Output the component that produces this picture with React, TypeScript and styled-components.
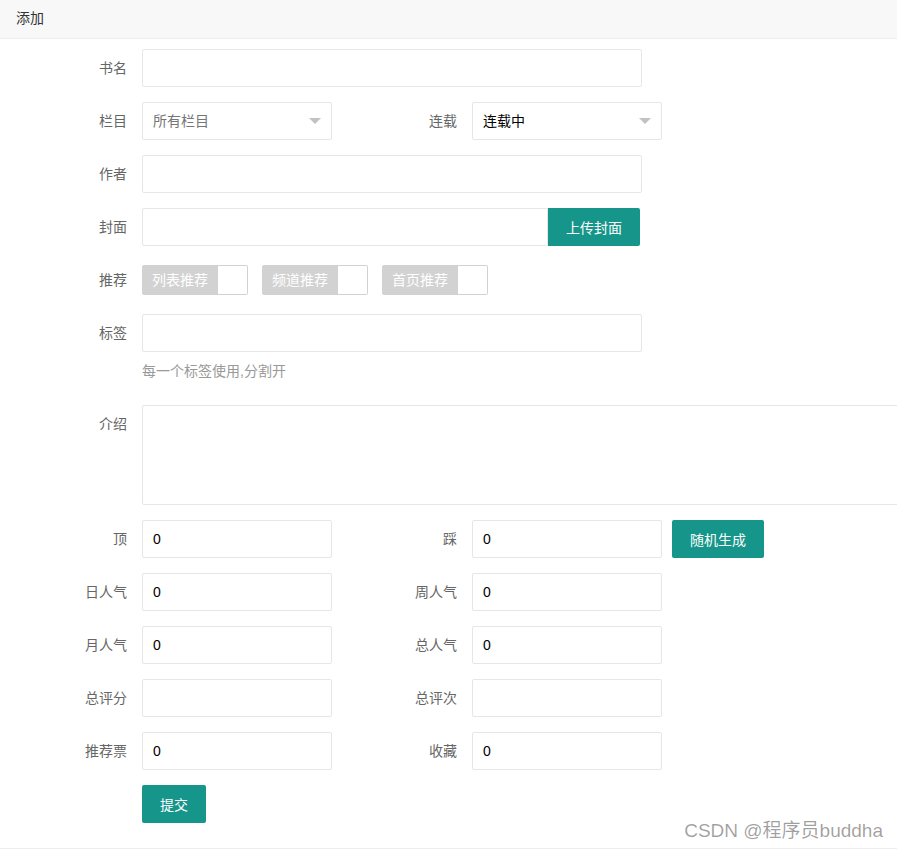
import React from "react";
import styled, { createGlobalStyle } from "styled-components";

const Global = createGlobalStyle`
  html, body { margin: 0; padding: 0; background: #fff; }
  body {
    font-family: "Liberation Sans", "Noto Sans CJK SC", sans-serif;
    font-size: 14px;
    color: #333;
  }
  * { box-sizing: border-box; }
`;

const Card = styled.div`
  position: relative;
  background: #fff;
  border-bottom: 1px solid #eee;
  overflow: hidden;
`;

const Header = styled.div`
  height: 39px;
  line-height: 36px;
  padding: 0 16px;
  background: #f8f8f8;
  border-bottom: 1px solid #eeeeee;
  color: #333;
  font-size: 14px;
`;

const Body = styled.div`
  padding: 10px 0 10px 32px;
`;

const Item = styled.div`
  display: flex;
  align-items: flex-start;
  margin-bottom: 15px;
`;

const Inline = styled.div<{ $gap?: number }>`
  display: flex;
  align-items: flex-start;
  flex: none;
  margin-right: ${(p) => p.$gap ?? 0}px;
`;

const Label = styled.label`
  flex: none;
  width: 110px;
  padding: 9px 15px;
  line-height: 20px;
  text-align: right;
  color: #666;
  white-space: nowrap;
`;

const Column = styled.div`
  display: flex;
  flex-direction: column;
`;

const Input = styled.input<{ $w?: number }>`
  display: block;
  flex: none;
  width: ${(p) => p.$w ?? 190}px;
  height: 38px;
  padding: 0 10px;
  border: 1px solid #e6e6e6;
  border-radius: 2px;
  background: #fff;
  font: inherit;
  font-size: 14px;
  color: #000;
  outline: none;
`;

const Group = styled.div`
  display: flex;
  flex: none;
  width: 498px;
`;

const GroupInput = styled(Input)`
  flex: 1;
  width: auto;
  border-radius: 2px 0 0 2px;
`;

const Button = styled.button<{ $ml?: number }>`
  flex: none;
  height: 38px;
  line-height: 38px;
  padding: 0 18px;
  margin-left: ${(p) => p.$ml ?? 0}px;
  border: none;
  border-radius: 2px;
  background: #16968a;
  color: #fff;
  font: inherit;
  font-size: 14px;
  white-space: nowrap;
  cursor: pointer;
`;

const GroupButton = styled(Button)`
  border-radius: 0 2px 2px 0;
`;

const Select = styled.div<{ $placeholder?: boolean }>`
  position: relative;
  flex: none;
  width: 190px;
  height: 38px;
  line-height: 36px;
  padding: 0 30px 0 10px;
  border: 1px solid #e6e6e6;
  border-radius: 2px;
  background: #fff;
  color: ${(p) => (p.$placeholder ? "#757575" : "#000")};
  &::after {
    content: "";
    position: absolute;
    right: 10px;
    top: 15px;
    border-width: 6px;
    border-style: solid;
    border-color: #c2c2c2 transparent transparent transparent;
  }
`;

const Checks = styled.div`
  display: flex;
  gap: 14px;
  padding-top: 4px;
`;

const Check = styled.div`
  display: flex;
  height: 30px;
`;

const CheckText = styled.span`
  height: 30px;
  line-height: 30px;
  padding: 0 10px;
  background: #d2d2d2;
  color: #fff;
  border-radius: 2px 0 0 2px;
  white-space: nowrap;
`;

const CheckBox = styled.i`
  display: block;
  width: 30px;
  height: 30px;
  border: 1px solid #d2d2d2;
  border-left: none;
  border-radius: 0 2px 2px 0;
  background: #fff;
`;

const Aux = styled.div`
  padding: 9px 0;
  line-height: 20px;
  color: #999;
`;

const TextArea = styled.textarea`
  display: block;
  flex: none;
  width: 780px;
  height: 100px;
  padding: 6px 10px;
  border: 1px solid #e6e6e6;
  border-radius: 2px;
  resize: none;
  font: inherit;
  outline: none;
`;

const Spacer = styled.div`
  width: 110px;
  flex: none;
`;

const Watermark = styled.div`
  position: absolute;
  right: 14px;
  bottom: 6px;
  font-size: 19px;
  line-height: 22px;
  color: rgba(0, 0, 0, 0.38);
  pointer-events: none;
`;

type Pair = [string, string, string, string];

const pairs: Pair[] = [
  ["日人气", "0", "周人气", "0"],
  ["月人气", "0", "总人气", "0"],
  ["总评分", "", "总评次", ""],
  ["推荐票", "0", "收藏", "0"],
];

export default function App() {
  return (
    <>
      <Global />
      <Card>
        <Header>添加</Header>
        <Body>
          <Item>
            <Label>书名</Label>
            <Input $w={500} />
          </Item>
          <Item>
            <Inline $gap={30}>
              <Label>栏目</Label>
              <Select $placeholder>所有栏目</Select>
            </Inline>
            <Inline>
              <Label>连载</Label>
              <Select>连载中</Select>
            </Inline>
          </Item>
          <Item>
            <Label>作者</Label>
            <Input $w={500} />
          </Item>
          <Item>
            <Label>封面</Label>
            <Group>
              <GroupInput />
              <GroupButton>上传封面</GroupButton>
            </Group>
          </Item>
          <Item>
            <Label>推荐</Label>
            <Checks>
              {["列表推荐", "频道推荐", "首页推荐"].map((t) => (
                <Check key={t}>
                  <CheckText>{t}</CheckText>
                  <CheckBox />
                </Check>
              ))}
            </Checks>
          </Item>
          <Item>
            <Label>标签</Label>
            <Column>
              <Input $w={500} />
              <Aux>每一个标签使用,分割开</Aux>
            </Column>
          </Item>
          <Item>
            <Label>介绍</Label>
            <TextArea />
          </Item>
          <Item>
            <Inline $gap={30}>
              <Label>顶</Label>
              <Input defaultValue="0" />
            </Inline>
            <Inline>
              <Label>踩</Label>
              <Input defaultValue="0" />
              <Button $ml={10}>随机生成</Button>
            </Inline>
          </Item>
          {pairs.map(([a, av, b, bv]) => (
            <Item key={a}>
              <Inline $gap={30}>
                <Label>{a}</Label>
                <Input defaultValue={av} />
              </Inline>
              <Inline>
                <Label>{b}</Label>
                <Input defaultValue={bv} />
              </Inline>
            </Item>
          ))}
          <Item>
            <Spacer />
            <Button>提交</Button>
          </Item>
        </Body>
        <Watermark>CSDN @程序员buddha</Watermark>
      </Card>
    </>
  );
}
